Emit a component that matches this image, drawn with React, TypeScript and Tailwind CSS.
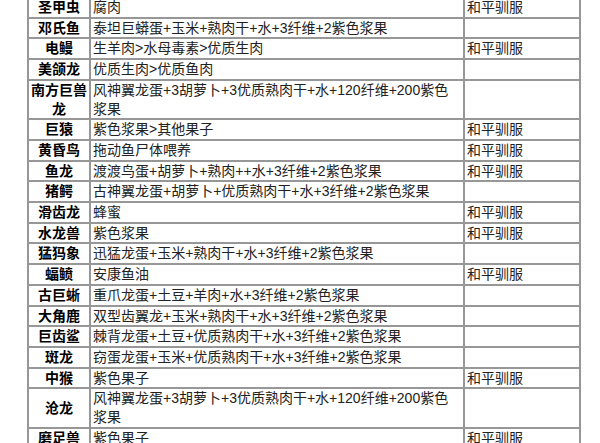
const rows: [string, string, string][] = [
  ["圣甲虫", "腐肉", "和平驯服"],
  ["邓氏鱼", "泰坦巨蟒蛋+玉米+熟肉干+水+3纤维+2紫色浆果", ""],
  ["电鳗", "生羊肉>水母毒素>优质生肉", "和平驯服"],
  ["美颌龙", "优质生肉>优质鱼肉", ""],
  ["南方巨兽龙", "风神翼龙蛋+3胡萝卜+3优质熟肉干+水+120纤维+200紫色浆果", ""],
  ["巨猿", "紫色浆果>其他果子", "和平驯服"],
  ["黄昏鸟", "拖动鱼尸体喂养", "和平驯服"],
  ["鱼龙", "渡渡鸟蛋+胡萝卜+熟肉++水+3纤维+2紫色浆果", "和平驯服"],
  ["猪鳄", "古神翼龙蛋+胡萝卜+优质熟肉干+水+3纤维+2紫色浆果", ""],
  ["滑齿龙", "蜂蜜", "和平驯服"],
  ["水龙兽", "紫色浆果", "和平驯服"],
  ["猛犸象", "迅猛龙蛋+玉米+熟肉干+水+3纤维+2紫色浆果", ""],
  ["蝠鲼", "安康鱼油", "和平驯服"],
  ["古巨蜥", "重爪龙蛋+土豆+羊肉+水+3纤维+2紫色浆果", ""],
  ["大角鹿", "双型齿翼龙+玉米+熟肉干+水+3纤维+2紫色浆果", ""],
  ["巨齿鲨", "棘背龙蛋+土豆+优质熟肉干+水+3纤维+2紫色浆果", ""],
  ["斑龙", "窃蛋龙蛋+玉米+优质熟肉干+水+3纤维+2紫色浆果", ""],
  ["中猴", "紫色果子", "和平驯服"],
  ["沧龙", "风神翼龙蛋+3胡萝卜+3优质熟肉干+水+120纤维+200紫色浆果", ""],
  ["磨足兽", "紫色果子", "和平驯服"],
];

const App = () => {
  return (
    <main className="w-[600px] h-[443px] overflow-hidden bg-white pl-[27px] font-['Liberation_Sans','Noto_Sans_CJK_SC',sans-serif] text-[14px] leading-[18.7px] text-[#222]">
      <table className="table-fixed border-collapse border-2 border-[#979797] w-[552px] mt-[-4px]">
        <colgroup>
          <col className="w-[62px]" />
          <col className="w-[374px]" />
          <col className="w-[116px]" />
        </colgroup>
        <tbody>
          {rows.map(([name, food, tame]) => (
            <tr key={name}>
              <td className="border-2 border-[#979797] p-0 text-center font-bold text-black align-middle">
                {name}
              </td>
              <td className="border-2 border-[#979797] py-0 pl-[2px] pr-[4px] align-middle">
                {food}
              </td>
              <td className="border-2 border-[#979797] py-0 px-[2px] align-middle">
                {tame}
              </td>
            </tr>
          ))}
        </tbody>
      </table>
    </main>
  );
};

export default App;
